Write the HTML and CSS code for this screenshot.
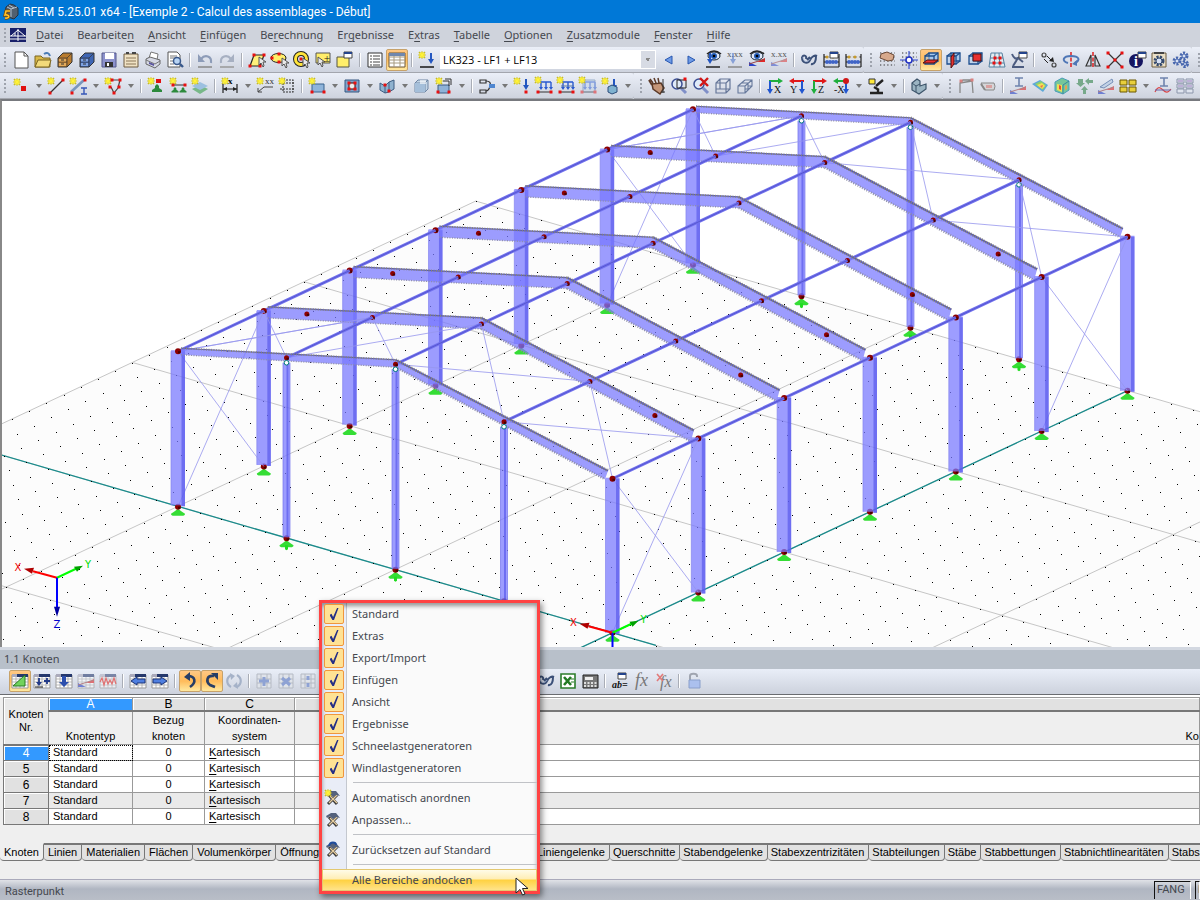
FILE: index.html
```html
<!DOCTYPE html>
<html lang="de">
<head>
<meta charset="utf-8">
<title>RFEM 5.25.01 x64 - [Exemple 2 - Calcul des assemblages - Début]</title>
<link rel="stylesheet" href="styles.css">
</head>
<body>
<header class="titlebar">
  <svg class="app-icon" width="16" height="18" viewBox="0 0 16 18"><path d="M3 4l4-3 4 1 4 3v7l-4 4-6-2-3-4z" fill="#51606f" stroke="#28323e"/><path d="M4 4l4 2 6-2M8 6v8M6 2l5 3" stroke="#b4c2cf" fill="none"/><path d="M7 8H3l-1 4c5-1 5 4 0 3" fill="none" stroke="#7a4a00" stroke-width="3"/><path d="M7 8H3l-1 4c5-1 5 4 0 3" fill="none" stroke="#ffc12a" stroke-width="1.6"/></svg>
  <h1 class="title">RFEM 5.25.01 x64 - [Exemple 2 - Calcul des assemblages - Début]</h1>
</header>
<nav class="menubar" aria-label="Hauptmenü">
  <span class="grip"></span>
  <svg class="doc-icon" width="16" height="14" viewBox="0 0 16 14"><path fill="#18206a" d="M0 0h16v14H0z"/><path d="M0 8h16M0 11h16M8 1v12M1 8l7-6 7 6M5 5v3" stroke="#fff" fill="none"/></svg>
  <button type="button"><u>D</u>atei</button><button type="button">Bearbeite<u>n</u></button><button type="button"><u>A</u>nsicht</button><button type="button"><u>E</u>infügen</button><button type="button">Be<u>r</u>echnung</button><button type="button">Er<u>g</u>ebnisse</button><button type="button">E<u>x</u>tras</button><button type="button"><u>T</u>abelle</button><button type="button"><u>O</u>ptionen</button><button type="button"><u>Z</u>usatzmodule</button><button type="button"><u>F</u>enster</button><button type="button"><u>H</u>ilfe</button>
</nav>
<div class="toolrow">
  <div class="toolbar">
    <span class="grip"></span>
    <span class="tools" data-tools="new open cabinet cabinetBlue save clip print preview | undo redo | selPoly selEllipse selRing selArrow selWin | list table* | loadStar"></span>
    <select class="loadcase" aria-label="Lastfall"><option>LK323 - LF1 + LF13</option></select>
    <span class="tools" data-tools="prev next eyeLoad xxLoad eyeRes xxRes | tongs abacusWin abacus"></span>
  </div>
  <div class="toolbar">
    <span class="grip"></span>
    <span class="tools" data-tools="gridHand gridSnap cubeA* cubeB cubeC gridRed wrenchWin | moveCopy rotate mirror nodesX info settings gears"></span>
  </div>
  <div class="toolbar last"><span class="grip"></span></div>
</div>
<div class="toolrow">
  <div class="toolbar">
    <span class="grip"></span>
    <span class="tools" data-tools="node&gt; line member&gt; poly&gt; | support lineSup surfSup | dim&gt; label frame | surface&gt; opening&gt; solid&gt; box boxStar&gt; | release&gt; loadNode loadMem loadLine loadFree loadSolid&gt;"></span>
  </div>
  <div class="toolbar">
    <span class="grip"></span>
    <span class="tools" data-tools="pan zoomWin zoomX wire boxes | axX axY axZ axNX&gt; scope&gt; | iso&gt;"></span>
  </div>
  <div class="toolbar last">
    <span class="grip"></span>
    <span class="tools" data-tools="portal tag | secI contour cubeRes arrowsG plane yellows&gt; secWave tableRes"></span>
  </div>
</div>

<main class="viewport">
  <svg id="scene" viewBox="2 101 1198 546" preserveAspectRatio="xMidYMid slice" role="img" aria-label="Hallenmodell"></svg>
</main>

<section class="panel">
  <h2 class="panel-title">1.1 Knoten</h2>
  <div class="panel-tools">
    <span class="tools" data-tools="tGreen* tRows tDown tRed tWave | tLeft tRight | undoP* redoP* sync | cellPlus cellX cellDots"></span>
    <span class="tools-gap"></span>
    <span class="tools" data-tools="tongs excel calc | abWin fx fxX | lock"></span>
  </div>
  <div class="sheet">
    <table>
      <colgroup><col class="c-no"><col class="c-a"><col class="c-b"><col class="c-c"><col></colgroup>
      <thead>
        <tr class="letters"><th rowspan="2" class="corner">Knoten<br>Nr.</th><th class="selected">A</th><th>B</th><th>C</th><th></th></tr>
        <tr class="names"><th>Knotentyp</th><th>Bezug<br>knoten</th><th>Koordinaten-<br>system</th><th class="comment">Ko</th></tr>
      </thead>
      <tbody>
        <tr><th class="selected">4</th><td class="focus">Standard</td><td class="num">0</td><td><u>K</u>artesisch</td><td></td></tr>
        <tr><th>5</th><td>Standard</td><td class="num">0</td><td><u>K</u>artesisch</td><td></td></tr>
        <tr><th>6</th><td>Standard</td><td class="num">0</td><td><u>K</u>artesisch</td><td></td></tr>
        <tr class="alt"><th>7</th><td>Standard</td><td class="num">0</td><td><u>K</u>artesisch</td><td></td></tr>
        <tr><th>8</th><td>Standard</td><td class="num">0</td><td><u>K</u>artesisch</td><td></td></tr>
      </tbody>
    </table>
  </div>
  <div class="tabs">
    <div class="tabgroup first"><button type="button" class="active">Knoten</button><button type="button">Linien</button><button type="button">Materialien</button><button type="button">Flächen</button><button type="button">Volumenkörper</button><button type="button" class="stretch">Öffnungen</button></div>
    <div class="tabgroup"><button type="button">Liniengelenke</button><button type="button">Querschnitte</button><button type="button">Stabendgelenke</button><button type="button">Stabexzentrizitäten</button><button type="button">Stabteilungen</button><button type="button">Stäbe</button><button type="button">Stabbettungen</button><button type="button">Stabnichtlinearitäten</button><button type="button">Stabsätze</button></div>
  </div>
</section>
<footer class="statusbar"><span class="status-text">Rasterpunkt</span><span class="cell">FANG</span><span class="cell narrow">F</span></footer>

<div class="popup">
  <label><input type="checkbox" checked>Standard</label>
  <label><input type="checkbox" checked>Extras</label>
  <label><input type="checkbox" checked>Export/Import</label>
  <label><input type="checkbox" checked>Einfügen</label>
  <label><input type="checkbox" checked>Ansicht</label>
  <label><input type="checkbox" checked>Ergebnisse</label>
  <label><input type="checkbox" checked>Schneelastgeneratoren</label>
  <label><input type="checkbox" checked>Windlastgeneratoren</label>
  <hr>
  <button type="button" data-icon="toolsStar">Automatisch anordnen</button>
  <button type="button" data-icon="toolsGear">Anpassen...</button>
  <hr>
  <button type="button" data-icon="toolsBlue">Zurücksetzen auf Standard</button>
  <hr>
  <button type="button" class="hot">Alle Bereiche andocken</button>
  <svg class="cursor" width="14" height="20" viewBox="0 0 14 20"><path d="M1 1v15l4-3.500 2.500 5.500 2.500-1-2.500-5.500H13z" fill="#fff" stroke="#222"/></svg>
</div>
<script src="app.js"></script>
</body>
</html>
```
FILE: styles.css
```css
* { box-sizing: border-box; }
body { margin: 0; height: 100vh; display: flex; flex-direction: column; overflow: hidden; position: relative; background: #cfd3dc; font: 11px/16px "Noto Sans", "Open Sans", sans-serif; color: #45484f; }
button { font: inherit; color: inherit; background: none; border: 0; padding: 0; margin: 0; }
h1, h2 { margin: 0; font-weight: 400; }

.titlebar { height: 23px; flex: none; display: flex; align-items: center; gap: 4px; padding-left: 3px; background: #0078d7; color: #fff; }
.title { font: 12px/16px Roboto, sans-serif; white-space: nowrap; }

.menubar { height: 24px; flex: none; display: flex; align-items: center; background: #cfd3dc; white-space: nowrap; }
.menubar button { padding: 0 7px; }
.doc-icon { margin-right: 3px; }
u { text-underline-offset: 2px; }

.grip { flex: none; width: 10px; height: 16px; background: radial-gradient(circle at 1px 1px, #9ea3ad 1px, #fff0 1px) 4px 1px / 8px 4px repeat-y; }
.toolrow { flex: none; height: 26px; display: flex; }
.toolbar { flex: none; display: flex; align-items: center; background: linear-gradient(#ebeff8, #ced3de); border-bottom: 1px solid #a3a6ae; border-radius: 0 3px 3px 0; }
.toolbar + .toolbar .grip { width: 12px; background-position: 6px 1px; }
.toolbar.last { flex: 1 0 auto; border-radius: 0; }
.tools { display: flex; align-items: center; }
.tool { width: 22px; height: 22px; flex: none; display: block; }
.tool.on { background: linear-gradient(#ffc885, #ffbb5a 50%, #ffe9a0); border: 1px solid #c7a26a; border-radius: 2px; }
.tool.on svg { margin: -1px; }
.tool svg { display: block; }
.drop { width: 13px; height: 22px; flex: none; display: grid; place-items: center; }
.drop::before { content: ""; border: 3px solid transparent; border-top: 4px solid #777; border-bottom: 0; }
.sep { width: 8px; height: 14px; flex: none; background: linear-gradient(90deg, #a9adb6 1px, #fff 1px, #fff 2px, #fff0 2px) 3px 0 / 5px 100% no-repeat; }
.loadcase { width: 216px; height: 19px; margin: 0 2px; padding: 0 2px; appearance: none; border: 1px solid #fff; border-radius: 0; color: #000; font: 11px/16px "Open Sans", sans-serif; background: linear-gradient(45deg, #fff0 50%, #888 50%) 204px 7px / 3px 3px no-repeat, linear-gradient(-45deg, #fff0 50%, #888 50%) 207px 7px / 3px 3px no-repeat, linear-gradient(90deg, #fff 200px, #d7dbe4 200px); }

.viewport { flex: 1; min-height: 0; border-top: 2px solid #77797e; border-left: 2px solid #888; background: #fff; }
#scene { display: block; width: 100%; height: 100%; }

.panel { flex: none; border-top: 3px solid #d3d8e1; background: #efefef; }
.panel-title { height: 19px; padding: 1px 4px; background: #b8c0ca; font-size: 11px; }
.panel-tools { height: 26px; display: flex; align-items: center; padding-left: 9px; background: linear-gradient(#e9eef8, #cdd2dd); border-bottom: 1px solid #6a6c70; }
.tools-gap { flex: 0 0 216px; }
.sheet { border-top: 2px solid #fff; padding-left: 3px; overflow: hidden; font: 11px/16px "Liberation Sans", Arial, sans-serif; color: #000; }
table { width: 100%; table-layout: fixed; border-collapse: collapse; border-top: 1px solid #555; }
.c-no { width: 45px; } .c-a { width: 84px; } .c-b { width: 72px; } .c-c { width: 90px; }
th, td { padding: 0; font-weight: 400; height: 16px; border: 1px solid #999; white-space: nowrap; overflow: hidden; }
td { padding: 0 4px; background: #fff; line-height: 15px; }
.alt td { background: #eaeaea; }
tbody th { font-size: 12px; line-height: 14px; background: #e1e1e1; border-color: #777; box-shadow: inset 1px 1px #fff; }
.letters th { height: 14px; line-height: 12px; font-size: 12px; background: #e1e1e1; border-bottom: 2px solid #777; box-shadow: inset 1px 1px #fff; }
.names th { height: 33px; vertical-align: bottom; background: #efefef; }
.letters .corner { font-size: 11px; line-height: 13px; vertical-align: middle; background: #e9e9e9; }
th.selected { background: #3399ff !important; color: #fff; }
.num { text-align: center; }
td.focus { outline: 1px dotted #000; outline-offset: -1px; }
.names .comment { text-align: right; }
.tabs { display: flex; margin-top: 18px; height: 36px; font: 11px/16px "Liberation Sans", Arial, sans-serif; color: #000; overflow: hidden; }
.tabgroup { display: flex; align-items: flex-start; }
.tabgroup.first { flex: 0 0 534px; }
.tabs button { flex: none; height: 18px; padding: 0 4px 0 3px; background: #e1e1e1; border: solid #777; border-width: 2px 1px 1px 0; border-radius: 0 0 4px 4px; white-space: nowrap; text-align: left; line-height: 15px; }
.tabs .first button { padding: 0 4px; }
.tabs .first .active { background: #efefef; border-top-color: #efefef; }
.tabs .stretch { flex: 1; }

.statusbar { flex: none; height: 21px; display: flex; align-items: center; gap: 4px; padding-left: 5px; border-top: 1px solid #aab; background: linear-gradient(#e0e2e7, #b0b6c2 45%, #b9bec7); font: 11px/16px Roboto, sans-serif; overflow: hidden; }
.status-text { flex: 1; padding-top: 3px; }
.cell { height: 18px; width: 37px; padding-left: 2px; flex: none; border: solid #111; border-width: 1px 1px 0 1px; border-right-color: #fff; }
.cell.narrow { width: 5px; overflow: hidden; }

.popup { position: absolute; left: 319px; bottom: 6px; width: 221px; border: 3px solid #ff4343; background: linear-gradient(90deg, #e9edf7 24px, #c4c8cf 24px, #c4c8cf 25px, #fafafa 25px); box-shadow: 2px 3px 6px #0007, inset 0 3px 4px #0006; }
.popup label, .popup button { display: flex; align-items: center; width: 100%; height: 22px; }
.popup input { appearance: none; width: 20px; height: 20px; margin: 0 8px 0 2px; border: 1px solid #f0963c; border-radius: 2px; background: #ffe294; display: grid; place-items: center; }
.popup input::before { content: ""; width: 9px; height: 12px; background: #262f86; clip-path: polygon(0 58%, 22% 48%, 40% 74%, 84% 0, 100% 0, 50% 100%, 32% 100%); }
.popup hr { height: 1px; margin: 3px 0 4px 31px; border: 0; background: #c0c2c6; }
.popup button svg { flex: none; margin-right: 8px; }
.popup .hot { padding-left: 29px; border: 1px solid #e3c871; background: linear-gradient(#fffbe8, #ffeeb5 45%, #ffd140 50%, #ffe38a); }
.popup .cursor { position: absolute; right: 8px; bottom: -6px; }
```
FILE: app.js
```js
const P = (d, s = '#333', w = 1, f = 'none') => `<path d="${d}" stroke="${s}" stroke-width="${w}" fill="${f}"/>`;
const F = (d, f, x = '') => `<path d="${d}" fill="${f}" ${x}/>`;
const T = (x, y, t, s = 9, c = '#333', e = '') => `<text x="${x}" y="${y}" font-size="${s}" fill="${c}" font-family="Liberation Serif, serif" ${e}>${t}</text>`;
const N = (...p) => p.map(([x, y]) => F(`M${x - 1.5} ${y - 1.5}h3v3h-3z`, '#e81010')).join('');
const star = (x = 6, y = 6) => P(`M${x - 3.5} ${y}h7M${x} ${y - 3.5}v7M${x - 3} ${y - 3}l6 6M${x - 3} ${y + 3}l6-6`, '#c9bd20', 1.6) + P(`M${x - 3} ${y}h6M${x} ${y - 3}v6M${x - 2} ${y - 2}l4 4M${x - 2} ${y + 2}l4-4`, '#fff23a', 1.1);
const arrow = (x, y) => P(`M${x} ${y}v8l2-2 2 4 1-1-1-4h3z`, '#555', 1, '#e8e8e8');
const sup = (x, y, k = 1) => F(`M${x} ${y}l${2 * k} ${2 * k}v${2 * k}l${3 * k} ${2 * k}v${2 * k}h${-10 * k}v${-2 * k}l${3 * k} ${-2 * k}v${-2 * k}z`, '#2c8a3c');
const cab = (a, b) => P('M4 9l5-5h9v9l-5 5H4z', '#333', 1, a) + P('M4 9h9v9M13 9l5-5M4 13h9', '#333', .7) + F('M5 10h7v2.500H5zM5 14h7v3H5z', b) + P('M7 11h3M7 15h3', '#333', 1.2);
const down = x => P(`M${x} 4v8`, '#2356c0', 2) + F(`M${x - 3} 10h6l-3 5z`, '#2356c0');
const win = (x, y) => P(`M${x} ${y}h8v6h-8z`, '#444', 1, '#fff') + F(`M${x} ${y}h8v2h-8z`, '#24448c');
const cube3 = red => P('M9 4h9v8H9z', '#1c4e8e', 1.3, '#a8c8ec') + P('M5 7h9v8H5z', '#1c4e8e', 1.3, '#a8c8ec88') + P('M5 7l4-3M14 7l4-3M14 15l4-3', '#1c4e8e', 1.2) + P(red, '#501010', 1, '#e83030');
const beads = P('M4 5v13M19 5v13M4 8h15M4 13h15M4 18h15', '#222', 1.2) + [7, 10, 13, 16].map(x => `<circle cx="${x}" cy="13" r="1.900" fill="#3f64c8"/><circle cx="${x}" cy="8" r="1.600" fill="${x % 2 ? '#c89b2a' : '#ddd'}"/>`).join('');
const tongs = P('M4 8c0 7 6 7 8 3s5-5 7-4M4 8c2-3 5-1 4 2M9 11l3-3M13 15c4 1 5-4 5-8', '#3b5078', 2) + P('M5 8c0 5 5 6 7 2', '#a4b7d8', .8);
const ramp = F('M3 13l8 4H3z', '#2b45c8') + F('M11 13l8-4v4z', '#e02828') + P('M3 15l16-5', '#944');
const eye = (x, y) => `<ellipse cx="${x}" cy="${y}" rx="6" ry="4" fill="#dfe8f8" stroke="#123"/><circle cx="${x}" cy="${y}" r="3" fill="#225bb5"/><circle cx="${x}" cy="${y}" r="1.300"/>` + P(`M${x - 7} ${y - 2}q7-6 14 0`, '#222', 1.6);
const lens = P('M13 13l5 5', '#7f8fc8', 3) + `<circle cx="9" cy="9" r="5" fill="#dfeaf8" stroke="#3a4e94" stroke-width="1.500"/>`;
const sheet = P('M3 5h16v13H3z', '#999', 1, '#fff') + P('M3 9h16M3 12h16M3 15h16M7 5v13M11 5v13M15 5v13', '#aaa', .8) + F('M3 4h5v3H3z', '#aab') + F('M8 4h11v3H8z', '#25386c');
const dotsG = P('M4 4h15M4 8h15M4 12h15M4 16h15', '#333', 1.2).replace('/>', ' stroke-dasharray="1.300 2.300"/>');
const gear = (x, y, r, c) => `<circle cx="${x}" cy="${y}" r="${r}" fill="none" stroke="${c}" stroke-width="3" stroke-dasharray="2 1.200"/><circle cx="${x}" cy="${y}" r="${r - 1}" fill="#d8e2f4" stroke="${c}"/>`;
const hammer = P('M6 17l9-9M7 8l8 9', '#3a3a3a', 3) + P('M7 16l8-8M8 9l7 7', '#e8cfa0', 1.4) + F('M4 7l5-3h5l4 5-4-1-3 2-3-3-3 2z', '#55627c');
const axis = (t, c1, c2, flip) => `<g>${P(flip ? 'M18 6H6' : 'M5 6h12', c1, 2)}${F(flip ? 'M3 6l5-3v6z' : 'M19 6l-5-3v6z', c1)}${P(flip ? 'M16 6v9' : 'M6 6v9', c2, 2)}${F(flip ? 'M13 14h6l-3 5z' : 'M3 14h6l-3 5z', c2)}${T(flip ? 4 : 10, 18, t, 10, '#111')}</g>`;
const bluebox = P('M4 8l3-3h10v9l-3 3H4z', '#6f86a4', 1, '#c2d4e6') + P('M4 8h10v9M14 8l3-3', '#6f86a4') + F('M4 8h10v9H4z', '#a5bfda') + F('M9 5h6v4H9z', '#fff9');
const mload = P('M7 7h11M8 7v6M13 7v6M18 7v6', '#2a5ad0', 1.4) + F('M6 12h4l-2 3zM11 12h4l-2 3zM16 12h4l-2 3z', '#2a5ad0') + P('M4 17h15', '#333') + N([5, 17], [18, 17]);
const cell = P('M4 4h14v14H4zM4 9h14M4 13h14M8 4v14M14 4v14', '#b5bac4', 1, '#dfe3ea');

const icons = {
  new: P('M5 3h9l4 4v12H5z', '#555', 1, '#fff') + P('M14 3v4h4', '#555'),
  open: P('M3 7h6l2 2h7v9H3z', '#7a6420', 1, '#d8b848') + P('M3 18l3-7h13l-2 7z', '#7a6420', 1, '#f2da7a') + P('M12 5c3-2 5-1 6 2', '#4a7bb4', 2),
  cabinet: cab('#b97c30', '#e3aa5b'), cabinetBlue: cab('#3f66b4', '#7ea3e4'),
  save: P('M4 4h14v14H4z', '#55598c', 1, '#8c92cc') + F('M7 4h9v6H7z', '#fff') + F('M7 13h8v5H7z', '#333') + F('M9 14h2v3H9z', '#fff'),
  clip: P('M4 5h14v13H4z', '#6c5a40', 1, '#f0e2c4') + P('M6 9h10M6 12h10M6 15h10', '#8a7658') + P('M6 4h3M12 4h4', '#444', 2),
  print: P('M7 9l2-6 7 2-1 6', '#777', 1, '#fff') + P('M4 10l4-2 10 3v4l-5 4-9-4z', '#666', 1, '#d5d8e4') + P('M4 11l9 4 5-3', '#777') + F('M7 15l5 2v-2l-5-2z', '#5b55a0'),
  preview: P('M4 3h9l3 3v12H4z', '#555', 1, '#fff') + P('M6 7h7M6 9h7M6 12h4M6 15h4', '#777') + `<circle cx="13" cy="12" r="3.500" fill="#b8d4f4" stroke="#38588c" stroke-width="1.500"/>` + P('M16 15l3 3', '#38588c', 2.4),
  undo: P('M7 10c4-5 11-3 10 4', '#8d9cb8', 2.2) + F('M4 5v8h7z', '#8d9cb8') + P('M4 18h14', '#888', 1.5),
  redo: P('M15 10c-4-5-11-3-10 4', '#a7b0c2', 2.2) + F('M18 5v8h-7z', '#a7b0c2') + P('M4 18h14', '#999', 1.5),
  selPoly: P('M4 17l4-11h10l-4 11z', '#222', 1.2, '#fff07a') + N([8, 6], [18, 6], [4, 17], [14, 17]) + arrow(13, 8),
  selEllipse: P('M3 9c0-6 15-6 15 0s-15 6-15 0z', '#222', 1, '#ffee6a') + N([4, 9], [11, 5], [11, 13]) + arrow(14, 9),
  selRing: `<circle cx="11" cy="10" r="5.500" fill="none" stroke="#222" stroke-width="5"/><circle cx="11" cy="10" r="5.500" fill="none" stroke="#ffe43a" stroke-width="3"/>` + N([11, 10]) + arrow(13, 9),
  selArrow: P('M4 4h14v10H4z', '#555', 1, '#ffee6a') + arrow(6, 8) + T(12, 13, '±', 11, '#111'),
  selWin: P('M3 8h12v10H3z', '#554', 1, '#ffee6a') + win(10, 3),
  list: P('M4 4h14v14H4z', '#333', 1, '#fff') + P('M6 7h2M9 7h7M6 10h2M9 10h7M6 13h2M9 13h7M6 16h2M9 16h7', '#444'),
  table: P('M3 4h16v14H3z', '#6a5638', 1, '#fff') + P('M3 8h16M3 11h16M3 14h16M8 6v12M14 6v12', '#a79a80') + F('M3 4h16v3H3z', '#7188ae'),
  loadStar: star() + down(15) + P('M4 18h14', '#222', 1.6),
  prev: P('M14 7v8l-7-4z', '#2756b0', 1, '#6f9be6'), next: P('M8 7v8l7-4z', '#2756b0', 1, '#6f9be6'),
  eyeLoad: eye(12, 7) + down(8) + P('M4 18h14', '#222', 1.5),
  xxLoad: T(3, 8, 'x.xx', 9, '#555') + `<g opacity=".45">${down(9)}</g>` + P('M4 18h14', '#888', 1.5),
  eyeRes: eye(11, 7) + ramp, xxRes: T(3, 8, 'x.xx', 9, '#555') + `<g opacity=".5">${ramp}</g>`,
  tongs, abacus: beads, abacusWin: beads + win(10, 3),
  gridHand: dotsG + P('M5 5l6-2 7 3-1 5-5 1-8-3z', '#6b4a38', 1, '#d7a98c'),
  gridSnap: dotsG + P('M11 2v18M2 11h18', '#3048d0', 1.1) + `<circle cx="11" cy="11" r="3" fill="#fff" stroke="#2030c0" stroke-width="1.500"/>`,
  cubeA: cube3('M3 14l4-3h11l-4 3z'), cubeB: cube3('M9 8l3-4v11l-3 4z'), cubeC: cube3('M9 5h8v7H9z'),
  gridRed: P('M5 4h11l3 14H3zM9 4L8 18M13 4l1 14M4 9h13M4 14h14', '#5580a0', 1, '#e2ecf2') + N([9, 9], [14, 9], [8, 14], [14, 14]),
  wrenchWin: P('M4 5c2 5 4 5 6 4l-5 8M10 9l5 4M4 18h12', '#4c5c80', 2) + win(11, 3),
  moveCopy: P('M4 6a2 2 0 104 0a2 2 0 10-4 0M14 16a2 2 0 104 0a2 2 0 10-4 0', '#444', 1.2) + P('M9 7l5 5M6 10l4 4', '#222') + F('M16 13l-5-1 4-4z', '#222'),
  rotate: P('M11 3v16', '#d00', 1.3).replace('/>', ' stroke-dasharray="4 1.500"/>') + P('M8 14c-7-2-5-7 3-7s10 4 4 7', '#4f77b6', 2) + F('M12 15l5-4v6z', '#4f77b6'),
  mirror: P('M11 3v16', '#d00', 1.3).replace('/>', ' stroke-dasharray="4 1.500"/>') + P('M4 17l5-11v11zM18 17l-5-11v11z', '#333', 1.2),
  nodesX: P('M4 4l14 14M18 4L4 18', '#333', 1.2) + N([4, 4], [18, 4], [4, 18], [18, 18], [11, 11]),
  info: `<circle cx="10" cy="12" r="7" fill="#151560"/>` + T(8, 17, 'i', 14, '#fff', 'font-weight="bold"') + win(12, 3),
  settings: P('M4 4h14v14H4z', '#6b5b3e', 1, '#eadfc6') + gear(11, 12, 4, '#33496e') + P('M6 4h10', '#444', 2),
  gears: gear(7, 12, 3, '#4766ae') + gear(14, 7, 3, '#4766ae') + gear(15, 15, 2.5, '#4766ae'),
  node: star(7, 7) + F('M11 11h5v5h-5z', '#e01010'),
  line: star() + P('M5 18L18 5', '#333', 1.3) + N([5, 18], [18, 5]),
  member: star() + P('M4 17L17 5', '#7a96bc', 2.6) + N([5, 18], [18, 5]) + P('M14 13h6M17 13v6M14 19h6', '#3657b8', 1.4),
  poly: star() + P('M9 5h9l-2 8-4 5-3-6', '#444', 1.2) + N([10, 5], [18, 5], [12, 18], [8, 12], [17, 12]),
  support: star() + F('M11 4h5v4h-5z', '#e01010') + sup(12, 9), lineSup: star() + P('M6 10h13', '#333') + N([6, 10], [18, 10]) + sup(8, 12, .7) + sup(16, 12, .7),
  surfSup: F('M3 14l8-4 8 4-8 5z', '#78b888') + F('M3 11l8-4 8 4-8 4z', '#9cc0e0') + star(),
  dim: star() + P('M4 9v9M18 9v9M4 14h14', '#222', 1.2) + F('M4 14l4-2v4zM18 14l-4-2v4z', '#222') + T(9, 9, 'x', 9, '#000', 'font-weight="bold"'),
  label: star() + P('M4 17l6-5h9M4 17v-4M4 17h4', '#444') + T(11, 9, 'xx', 9),
  frame: P('M7 5h10v12H7zM4 8h15M4 14h15', '#333', 1.1).replace('/>', ' stroke-dasharray="2 1"/>') + star(),
  surface: P('M6 9h12v8H6z', '#38628e', 1, '#8fb4da') + star() + N([6, 17], [18, 17]),
  opening: P('M4 5h14v12H4z', '#345780', 1, '#7fa4cc') + P('M8 8h6v6H8z', '#400', 1, '#eee') + N([8, 8], [14, 8], [8, 14], [14, 14]),
  solid: P('M4 8l5 3 4-4 5-2v9l-5 3-4 1-5-3z', '#3c5d82', 1, '#8fb2cf') + P('M9 11v7M13 7v10', '#3c5d82') + N([9, 10], [13, 16]),
  box: bluebox, boxStar: P('M5 10h11v8H5z', '#3c5d82', 1, '#8fb2d8') + P('M12 4h6v6M10 6h6v5', '#333') + star() + N([16, 17], [5, 17]),
  release: P('M4 5h6v3H4zM4 15h6v3H4z', '#333', 1.2) + P('M10 6c4 0 5 2 4 5-1 4-2 5-4 5', '#333', 1.2) + F('M13 9h6v4h-6z', '#4f86d0'),
  loadNode: star() + down(15) + N([15, 17]), loadMem: mload + star(5, 5), loadLine: mload + star(5, 5) + P('M6 11h13', '#5676a8'),
  loadFree: `<g opacity=".5">${P('M6 5h12v12H6z', '#4f78a8', 1, '#c4d6e8') + mload}</g>` + star(5, 5), loadSolid: down(15) + P('M9 12l4-2 5 2v5l-5 2-4-2z', '#2c4d7a', 1, '#7fb2d0') + star(),
  pan: P('M4 4l3 4M8 3l2 5M12 3l1 5M6 9l9-1 3 5-4 6-7-5z', '#5c3a28', 1.5, '#c59678') + P('M3 5l3 5', '#5c3a28', 2) + P('M17 4v14M15 17h4', '#333'),
  zoomWin: lens + P('M9 5h9v8H9z', '#222') + N([17, 4]), zoomX: lens + P('M10 3l8 8M18 3l-8 8', '#d21616', 2.4),
  wire: P('M4 8l4-4h10v10l-4 4H4zM4 8h10v10M14 8l4-4M8 4v10H4M8 14h10', '#667799', 1.2), boxes: P('M11 5h7v6h-4M8 8h6v6h-3M4 11h7v7H4zM4 11l7-6M11 11l7-6M11 18l7-7', '#66799c', 1.1),
  axX: axis('X', '#1fae3c', '#2156d0'), axY: axis('Y', '#e01818', '#2156d0', 1), axZ: axis('Z', '#e01818', '#1fae3c'), axNX: axis('-X', '#1fae3c', '#2156d0', 1) + '<circle cx="16" cy="6" r="3" fill="#d01818"/>',
  scope: P('M4 4h6v5H4z', '#333', 1, '#ffe93a') + P('M18 5l-7 6M9 12l5 3M5 18h13M13 15v3', '#222', 2.4), iso: P('M4 8l5-4 3 2v5l6-2v5l-7 5-7-4z', '#3d546a', 1.2, '#9bb4c2') + P('M4 8l4 3v6M8 11l4-2', '#3d546a'),
  portal: P('M5 18V8L8 5h9l1 13M5 8l12-2', '#888', 1.3) + N([6, 6], [17, 5]).replace(/#e81010/g, '#d98080'), tag: P('M4 8h13q2 3 0 7H8z', '#888', 1, '#d5d5d8') + F('M9 10h6v3H9z', '#d8a0a0') + P('M4 9l4 6', '#888', 2),
  secI: P('M8 3h8M12 3v8M8 11h8', '#6f84ae', 1.6) + `<g opacity=".6" transform="translate(0 2)">${ramp}</g>`,
  contour: F('M3 9l8-4 8 5-5 7z', '#5da8d8') + F('M6 9l6-3 5 4-3 5z', '#8bd070') + F('M8 10l5-2 3 3-3 3z', '#f3df55') + F('M11 11l3-1-1 3z', '#e87050'),
  cubeRes: P('M4 7l7-4 7 3v9l-6 4-8-3z', '#4a9db8', 1, '#76c69a') + F('M6 9l5 1v7l-5-2z', '#f0e055') + F('M8 10l2 1v4l-2-1z', '#e84a3a') + P('M12 10v9M12 10l6-4', '#3787a0') + F('M14 11l2-1v4l-2 1z', '#e8a050'),
  arrowsG: F('M5 4h5v4h2l-4.500 4L3 8h2zM12 6l4-3v2h4v3h-4v2zM10 19v-4H8l3.500-4L15 15h-2v4z', '#77a98a'), plane: P('M5 12L17 4l1 3-9 6z', '#7790b8', 1, '#c4d2e6') + `<g opacity=".6" transform="translate(0 2)">${ramp}</g>`,
  yellows: [[3, 5], [12, 5], [3, 12], [12, 12]].map(([x, y]) => P(`M${x} ${y}h7v5h-7z`, '#6a5900', 1, '#e8cf3c')).join(''),
  secWave: P('M8 3h8M12 3v8M8 11h8', '#6f84ae', 1.6) + P('M3 17c3-6 5-5 8-2s5 3 8-1', '#d44', 1.2) + P('M3 15h16', '#66a'), tableRes: P('M3 4h7v4H3zM12 4h7v4h-7zM3 9h7v4H3zM12 9h7v4h-7zM3 14h7v4H3zM12 14h7v4h-7z', '#8b95aa', 1, '#dfe4ee') + P('M4 6h5M13 6h5M4 11h5M13 11h5', '#9d7fc0'),
  tGreen: sheet + P('M4 16L16 5v11z', '#2b7a24', 1, '#72d35c'), tRows: sheet + P('M8 8v6M13 11h6M16 8v6', '#223a88', 1.8) + F('M5 12h6l-3 4z', '#223a88') + P('M4 17h8', '#222'), tDown: sheet + F('M9 6h4v6h3l-5 5-5-5h3z', '#2c4fae'),
  tRed: `<g opacity=".6">${sheet + ramp}</g>`, tWave: `<g opacity=".55">${sheet}</g>` + P('M3 12l2-4 2 7 2-7 2 6 2-4 2 4 2-6 2 6', '#e27070', 1.2),
  tLeft: sheet + P('M4 11l6-4v2h8v4h-8v2z', '#1c3476', 1, '#4f7fe0'), tRight: sheet + P('M18 11l-6-4v2H4v4h8v2z', '#1c3476', 1, '#4f7fe0'),
  undoP: P('M9 6c7 0 9 6 2 11', '#273e66', 2.6) + F('M5 7l6-5v9z', '#273e66'), redoP: P('M13 6c-8-1-8 6-4 9l5 2', '#273e66', 2.6) + F('M10 3h7v7z', '#273e66'), sync: P('M8 5c-5 3-5 9 0 12M14 17c5-3 5-9 0-12', '#a5b2c8', 2.2) + F('M7 3l5 3-4 4zM15 19l-5-3 4-4z', '#a5b2c8'),
  cellPlus: cell + P('M11 7v9M6 11h10', '#8ea2d4', 3), cellX: cell + P('M7 8l8 7M15 8l-8 7', '#8ea2d4', 3), cellDots: cell + P('M11 6v4M11 13v4', '#8ea2d4', 3),
  excel: P('M4 4h14v14H4z', '#2b7c2b', 1.6, '#fff') + P('M7 7l7 8M14 7l-7 8', '#247a24', 2.6) + P('M14 9h3M14 12h3', '#247a24'), calc: P('M4 5h15v13H4z', '#222', 1, '#777') + F('M6 7h8v3H6z', '#eee') + P('M5 13h13M5 16h13', '#fff', 1.5).replace('/>', ' stroke-dasharray="2 1.500"/>'),
  abWin: win(9, 3) + T(3, 18, 'ab=', 10, '#111', 'font-style="italic" font-weight="bold"'), fx: T(4, 16, 'fx', 18, '#777', 'font-style="italic"'), fxX: T(7, 17, 'fx', 16, '#777', 'font-style="italic"') + P('M4 4l6 7M10 4l-6 7', '#e27a7a', 1.6),
  lock: P('M7 11V6c0-3 7-3 7 0v1', '#a0a5b0', 2) + P('M6 10h11v8H6z', '#8a9fcb', 1, '#abc0ee'),
  toolsStar: hammer + star(), toolsGear: hammer, toolsBlue: hammer + P('M7 7c1-5 7-4 7-1', '#204d9c', 1.8)
};
const svg = n => `<svg width="22" height="22" viewBox="0 0 22 22">${icons[n]}</svg>`;
document.querySelectorAll('[data-tools]').forEach(el => {
  el.innerHTML = el.dataset.tools.split(' ').map(t => {
    if (t === '|') return '<span class="sep"></span>';
    const n = t.replace(/[*>]/, '');
    return `<button type="button" class="tool${t.endsWith('*') ? ' on' : ''}" aria-label="${n}">${svg(n)}</button>` + (t.endsWith('>') ? `<button type="button" class="drop" aria-label="${n} Auswahl"></button>` : '');
  }).join('');
});
document.querySelectorAll('[data-icon]').forEach(el => el.insertAdjacentHTML('afterbegin', svg(el.dataset.icon)));

// Axonometric hall model: the floor grid is in metres, bays are 5 m deep.
const grid = (a, b) => [612.5 - 21.73 * a + 17.17 * b, 633 - 6.32 * a - 8.07 * b];
const ln = (p, q, s, w = 1, x = '') => `<path d="M${p[0]} ${p[1]}L${q[0]} ${q[1]}" stroke="${s}" stroke-width="${w}" fill="none" ${x}/>`;
const pg = (pts, f) => `<path d="M${pts.map(p => p.join(' ')).join('L')}z" fill="${f}"/>`;
let out = pg([grid(30, -40), grid(30, 30), grid(-40, 30), grid(-40, -40)], '#fcfcfc');
for (const k of [30, 20, 10, 0, -10, -20]) {
  out += ln(grid(k, -30), grid(k, 30), '#c6c6c6') + ln(grid(30, k), grid(-30, k), '#c6c6c6');
}
out += ln(grid(0, -2), grid(0, 30), '#1a8c8c', 1.3) + ln(grid(-2, 0), grid(30, 0), '#1a8c8c', 1.3);
let dots = '';
for (let a = -30; a <= 30; a++) for (let b = -30; b <= 30; b++) {
  const [x, y] = grid(a, b);
  if (x > 0 && x < 1202 && y < 650) dots += `M${Math.round(x)} ${Math.round(y)}h1v1h-1z`;
}
out += F(dots, '#000', 'shape-rendering="crispEdges"');

const at = (i, x, y) => [x + 85.83 * i, y - 40.33 * i];
const tops = [[178, 351.5], [286.5, 358], [395.5, 364.5], [504, 422], [612.5, 479]];
const bases = [[178, 507], [286.5, 538.5], [395.5, 570], [504, 601.5], [612.5, 633]];
const ball = ([x, y], r = 3) => `<circle cx="${x}" cy="${y}" r="${r}" fill="#8c0000"/><path d="M${x} ${y}h2.500v2h-2.500z" fill="#2a0000" opacity=".7"/>`;
const foot = ([x, y], thin) => F(`M${x} ${y + 2}l4 3 3 2q0 2-3 2h-8q-3 0-3-2l3-2z`, '#35dd35') + (thin ? F(`M${x - 1.5} ${y + 7}h3v4l-1.500 1-1.500-1z`, '#1fdc1f') : '');
const fill = 'rgba(120,120,255,.73)', dark = 'rgba(80,80,232,.6)';
const col = ([x, y], h) => F(`M${x - 7} ${y - 1}h14v${h + 1}h-4v-1h-10z`, fill) + F(`M${x + 3.5} ${y}h3.500v${h}h-3.500z`, dark) + P(`M${x - 7} ${y}v${h - 1}`, '#8585ee', .7);
const post = ([x, y], h) => F(`M${x - 3.5} ${y + 5}h7v${h - 6}h-7z`, fill) + F(`M${x} ${y + 5}h2v${h - 6}h-2z`, dark) + P(`M${x - 3.5} ${y + 5}v${h - 6}M${x + 3.5} ${y + 5}v${h - 6}`, '#7474ec', .7);
const brace = (i, p, q) => ln(at(i, ...p), at(i, ...q), '#9696ee', .8);
const up = p => at(1, ...p);
for (let i = 6; i >= 0; i--) {
  const end = i === 0 || i === 6;
  const t = tops.map(p => at(i, ...p)), b = bases.map(p => at(i, ...p));
  if (i === 5 || i === 0) {
    [[tops[0], up(bases[0])], [up(tops[0]), bases[0]], [tops[4], up(bases[4])], [up(tops[4]), bases[4]]].forEach(([p, q]) => out += brace(i, p, q));
    for (let k = 0; k < 4; k++) out += brace(i, tops[k], up(tops[k + 1])) + brace(i, up(tops[k]), tops[k + 1]);
    out += brace(i, tops[0], up(tops[1]));
  }
  if (i < 6) tops.forEach(p => { out += ln(at(i, ...p), at(i + 1, ...p), '#7070ee', 3) + ln(at(i, ...p), at(i + 1, ...p), '#5050c8', .8); });
  [0, 4].forEach(k => { out += foot(b[k]) + ball(b[k]) + col(t[k], 155); });
  if (end) [1, 2, 3].forEach(k => { out += foot(b[k], true) + ball(b[k]) + post(t[k], b[k][1] - t[k][1]); });
  const u = end ? [[181, 348.5], [395.5, 360], [608, 471]] : [[182, 347.5], [395.5, 358.5], [608, 471]];
  const d = end ? [[181, 355], [395.5, 367.5], [605, 479.5]] : [[182, 358.5], [395.5, 369.5], [605, 482]];
  const U = u.map(p => at(i, ...p)), D = d.map(p => at(i, ...p));
  out += pg([...U, ...D.slice().reverse()], fill);
  for (let k = 0; k < 2; k++) {
    out += ln(U[k], U[k + 1], '#5858b4', k ? 1.8 : 1.2) + ln(U[k], U[k + 1], '#8a8878', k ? 3 : 2, 'stroke-dasharray="1 1.500"') + ln(D[k], D[k + 1], '#8f8fa8', k ? 2.4 : 1.4, 'stroke-dasharray="1 1.500"');
  }
  if (!end) out += ball(at(i, 221, 354.5), 2.5) + ball(at(i, 569, 456), 2.5);
  t.forEach((p, k) => out += ball(p, k % 4 ? 2.5 : 3));
  if (end) [1, 2, 3].forEach(k => out += `<circle cx="${t[k][0]}" cy="${t[k][1] + 5}" r="2.300" fill="#fff" stroke="#007a7a"/>`);
}
const lab = (x, y, t, c) => `<text x="${x}" y="${y}" font-size="10" fill="${c}" text-anchor="middle" font-family="DejaVu Sans, sans-serif">${t}</text>`;
const gizmo = (x, y) => ln([x, y], [x - 24, y - 6.5], '#f00', 2) + F(`M${x - 33} ${y - 9}l10 -1-2 6z`, '#b00000') + ln([x, y], [x + 19, y - 9], '#0f0', 2) + F(`M${x + 26} ${y - 12}l-9 1 3 5z`, '#00a000') + ln([x, y], [x, y + 30], '#00f', 2) + F(`M${x} ${y + 39}l-3-10h6z`, '#0000a0') + lab(x - 39, y - 7, 'X', '#e00') + lab(x + 31, y - 10, 'Y', '#0d0') + lab(x, y + 50, 'Z', '#00c');
out += gizmo(57, 578) + gizmo(612.5, 633);
document.getElementById('scene').innerHTML = out;
```
